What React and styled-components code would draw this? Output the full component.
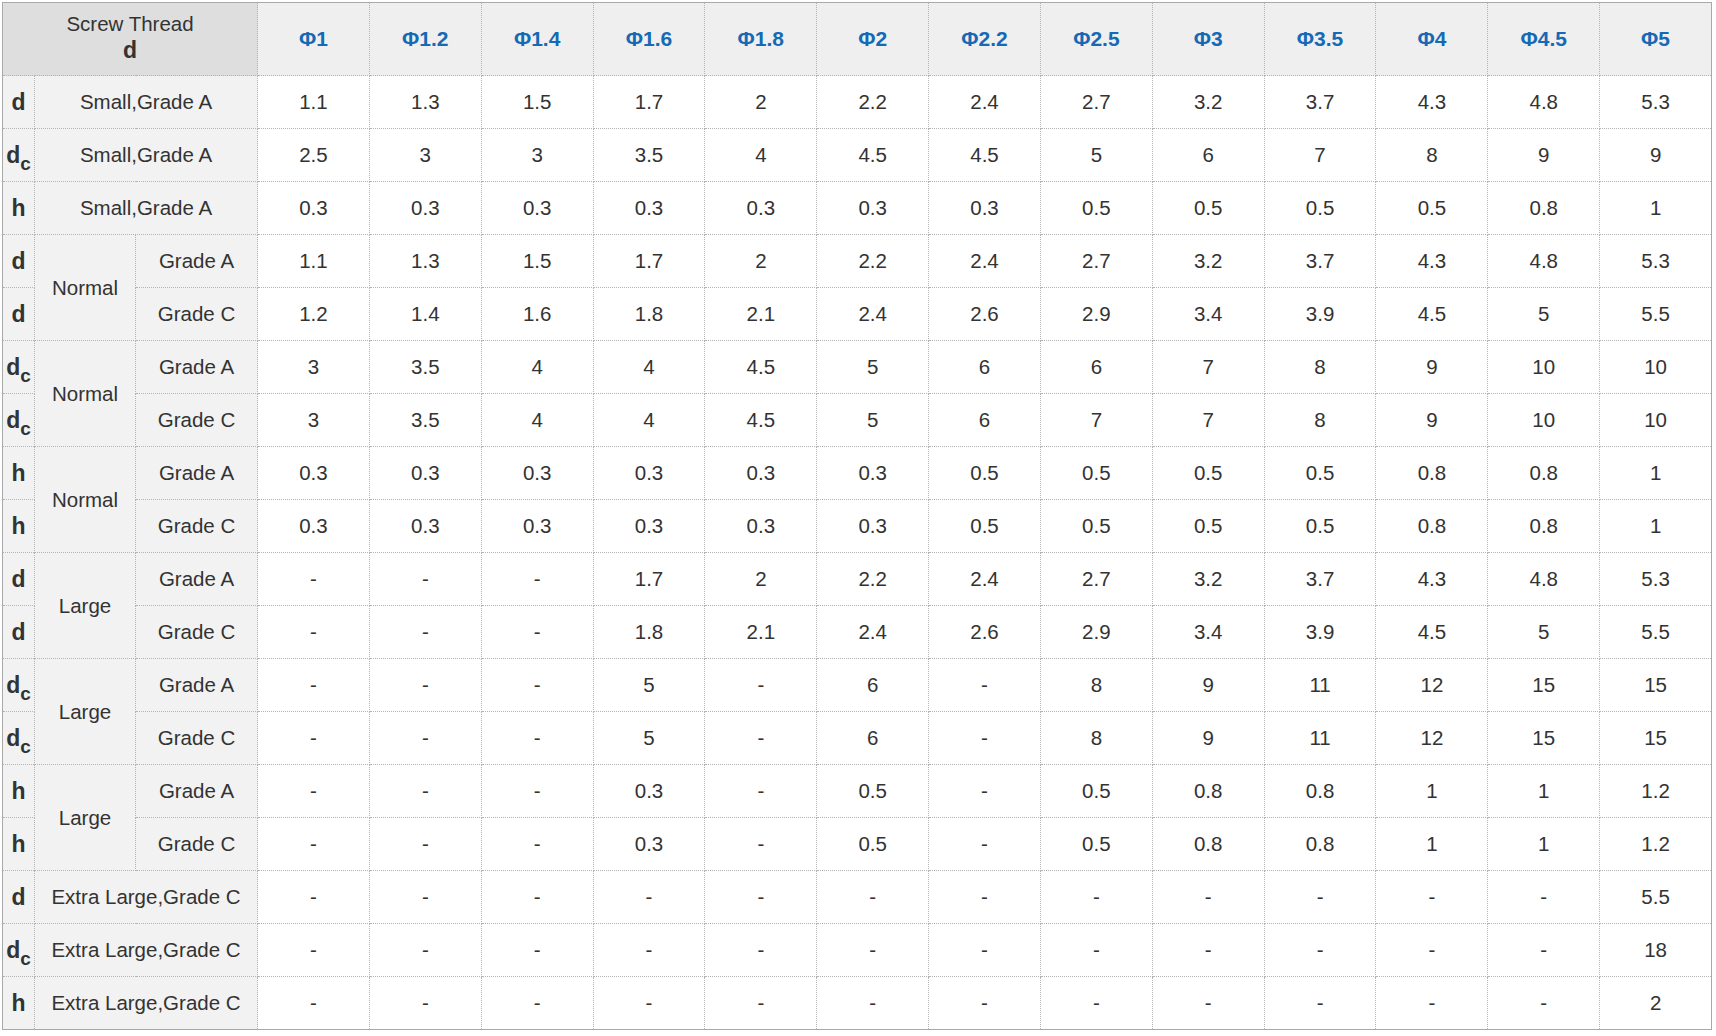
import React from "react";
import styled, { createGlobalStyle } from "styled-components";

const GlobalStyle = createGlobalStyle`
  html, body {
    margin: 0;
    padding: 0;
    background: #ffffff;
  }
  body {
    font-family: "Liberation Sans", Arial, sans-serif;
    color: #333333;
  }
`;

const Page = styled.div`
  padding: 2px 4px 0 2px;
`;

const Table = styled.table`
  width: 1710px;
  table-layout: fixed;
  border-collapse: collapse;
  border: 1px solid #a9a9a9;
  font-family: "Liberation Sans", Arial, sans-serif;
  font-size: 20.5px;
  color: #333333;
`;

const Row = styled.tr`
  height: ${(p) => (p.$header ? "73px" : "53px")};
`;

const Cell = styled.td`
  border: 1px dotted #b3b3b3;
  text-align: center;
  vertical-align: middle;
  padding: 0;
  line-height: 26px;
`;

const HeadCell = styled(Cell).attrs({ as: "th" })`
  background: ${(p) => (p.$corner ? "#dedede" : "#efefef")};
  color: ${(p) => (p.$corner ? "#333333" : "#1569b5")};
  font-weight: ${(p) => (p.$corner ? "normal" : "bold")};
  font-size: ${(p) => (p.$corner ? "20.5px" : "21px")};
  vertical-align: ${(p) => (p.$corner ? "top" : "middle")};
  padding-top: ${(p) => (p.$corner ? "8px" : "0")};
`;

const CornerBold = styled.b`
  display: block;
  font-weight: bold;
  font-size: 23px;
`;

const SymbolCell = styled(Cell)`
  background: #f2f2f2;
  font-weight: bold;
  font-size: 23px;
  color: #333333;
`;

const Sub = styled.sub`
  font-size: 19px;
  vertical-align: -7px;
  line-height: 0;
`;

const LabelCell = styled(Cell)`
  background: #f2f2f2;
  color: #333333;
`;

const ValueCell = styled(Cell)`
  background: #ffffff;
  color: #333333;
`;

const sizes = ["Φ1", "Φ1.2", "Φ1.4", "Φ1.6", "Φ1.8", "Φ2", "Φ2.2", "Φ2.5", "Φ3", "Φ3.5", "Φ4", "Φ4.5", "Φ5"];

const D = "-";
const rows = [
  { sym: "d", label: "Small,Grade A", span: true, v: ["1.1", "1.3", "1.5", "1.7", "2", "2.2", "2.4", "2.7", "3.2", "3.7", "4.3", "4.8", "5.3"] },
  { sym: "dc", label: "Small,Grade A", span: true, v: ["2.5", "3", "3", "3.5", "4", "4.5", "4.5", "5", "6", "7", "8", "9", "9"] },
  { sym: "h", label: "Small,Grade A", span: true, v: ["0.3", "0.3", "0.3", "0.3", "0.3", "0.3", "0.3", "0.5", "0.5", "0.5", "0.5", "0.8", "1"] },
  { sym: "d", group: "Normal", grade: "Grade A", v: ["1.1", "1.3", "1.5", "1.7", "2", "2.2", "2.4", "2.7", "3.2", "3.7", "4.3", "4.8", "5.3"] },
  { sym: "d", grade: "Grade C", v: ["1.2", "1.4", "1.6", "1.8", "2.1", "2.4", "2.6", "2.9", "3.4", "3.9", "4.5", "5", "5.5"] },
  { sym: "dc", group: "Normal", grade: "Grade A", v: ["3", "3.5", "4", "4", "4.5", "5", "6", "6", "7", "8", "9", "10", "10"] },
  { sym: "dc", grade: "Grade C", v: ["3", "3.5", "4", "4", "4.5", "5", "6", "7", "7", "8", "9", "10", "10"] },
  { sym: "h", group: "Normal", grade: "Grade A", v: ["0.3", "0.3", "0.3", "0.3", "0.3", "0.3", "0.5", "0.5", "0.5", "0.5", "0.8", "0.8", "1"] },
  { sym: "h", grade: "Grade C", v: ["0.3", "0.3", "0.3", "0.3", "0.3", "0.3", "0.5", "0.5", "0.5", "0.5", "0.8", "0.8", "1"] },
  { sym: "d", group: "Large", grade: "Grade A", v: [D, D, D, "1.7", "2", "2.2", "2.4", "2.7", "3.2", "3.7", "4.3", "4.8", "5.3"] },
  { sym: "d", grade: "Grade C", v: [D, D, D, "1.8", "2.1", "2.4", "2.6", "2.9", "3.4", "3.9", "4.5", "5", "5.5"] },
  { sym: "dc", group: "Large", grade: "Grade A", v: [D, D, D, "5", D, "6", D, "8", "9", "11", "12", "15", "15"] },
  { sym: "dc", grade: "Grade C", v: [D, D, D, "5", D, "6", D, "8", "9", "11", "12", "15", "15"] },
  { sym: "h", group: "Large", grade: "Grade A", v: [D, D, D, "0.3", D, "0.5", D, "0.5", "0.8", "0.8", "1", "1", "1.2"] },
  { sym: "h", grade: "Grade C", v: [D, D, D, "0.3", D, "0.5", D, "0.5", "0.8", "0.8", "1", "1", "1.2"] },
  { sym: "d", label: "Extra Large,Grade C", span: true, v: [D, D, D, D, D, D, D, D, D, D, D, D, "5.5"] },
  { sym: "dc", label: "Extra Large,Grade C", span: true, v: [D, D, D, D, D, D, D, D, D, D, D, D, "18"] },
  { sym: "h", label: "Extra Large,Grade C", span: true, v: [D, D, D, D, D, D, D, D, D, D, D, D, "2"] },
];

function Symbol({ s }) {
  if (s === "dc") {
    return (
      <>
        d<Sub>c</Sub>
      </>
    );
  }
  return <>{s}</>;
}

export default function App() {
  return (
    <>
      <GlobalStyle />
      <Page>
        <Table>
          <colgroup>
            <col style={{ width: 32 }} />
            <col style={{ width: 101 }} />
            <col style={{ width: 122 }} />
            {sizes.map((s) => (
              <col key={s} />
            ))}
          </colgroup>
          <thead>
            <Row $header>
              <HeadCell $corner colSpan={3}>
                Screw Thread
                <CornerBold>d</CornerBold>
              </HeadCell>
              {sizes.map((s) => (
                <HeadCell key={s}>{s}</HeadCell>
              ))}
            </Row>
          </thead>
          <tbody>
            {rows.map((r, i) => (
              <Row key={i}>
                <SymbolCell>
                  <Symbol s={r.sym} />
                </SymbolCell>
                {r.span ? (
                  <LabelCell colSpan={2}>{r.label}</LabelCell>
                ) : (
                  <>
                    {r.group && <LabelCell rowSpan={2}>{r.group}</LabelCell>}
                    <LabelCell>{r.grade}</LabelCell>
                  </>
                )}
                {r.v.map((val, j) => (
                  <ValueCell key={j}>{val}</ValueCell>
                ))}
              </Row>
            ))}
          </tbody>
        </Table>
      </Page>
    </>
  );
}
